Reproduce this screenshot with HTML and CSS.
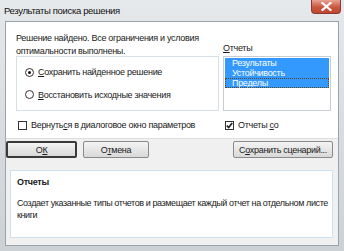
FILE: index.html
```html
<!DOCTYPE html>
<html lang="ru">
<head>
  <meta charset="UTF-8">
  <title>Результаты поиска решения</title>
  <link rel="stylesheet" href="styles.css">
</head>
<body>
  <div class="window">
    <div class="titlebar">
      <span class="title">Результаты поиска решения</span>
      <span class="close">
        <svg width="11" height="9" viewBox="0 0 11 9">
          <path d="M1.5 1 L9.5 8 M9.5 1 L1.5 8" stroke="#fff" stroke-width="2.2" stroke-linecap="square"/>
        </svg>
      </span>
    </div>
    <div class="client">
      <div class="main">
        <div class="left">
          <p class="msg">Решение найдено. Все ограничения и условия<br>оптимальности выполнены.</p>
          <div class="choice">
            <label class="opt"><span class="radio on"></span><span><u>С</u>охранить найденное решение</span></label>
            <label class="opt"><span class="radio"></span><span><u>В</u>осстановить исходные значения</span></label>
          </div>
        </div>
        <div class="right">
          <div class="list-label"><u>О</u>тчеты</div>
          <ul class="list">
            <li class="sel">Результаты</li>
            <li class="sel">Устойчивость</li>
            <li class="sel focus">Пределы</li>
          </ul>
        </div>
        <label class="check"><span class="box"></span><span>Вернуть<u>с</u>я в диалоговое окно параметров</span></label>
        <label class="check"><span class="box on">
          <svg width="7" height="7" viewBox="0 0 7 7"><path d="M0.8 3.6 L2.7 5.6 L6.2 1" fill="none" stroke="#222" stroke-width="1.6"/></svg>
        </span><span>Отчеты <u>с</u>о</span></label>
      </div>

      <div class="buttons">
        <button class="btn default">О<u>К</u></button>
        <button class="btn">О<u>т</u>мена</button>
        <button class="btn wide">С<u>о</u>хранить сценарий...</button>
      </div>

      <div class="help">
        <div class="help-title">Отчеты</div>
        <p class="help-text">Создает указанные типы отчетов и размещает каждый отчет на отдельном листе книги</p>
      </div>
    </div>
  </div>
</body>
</html>
```

FILE: styles.css
```css
body {
  margin: 0;
  font-family: 'Liberation Sans', Arial, sans-serif;
  font-size: 9px;
  letter-spacing: -0.3px;
  color: #1a1a1a;
}

.window {
  width: 344px;
  height: 251px;
  box-sizing: border-box;
  background: linear-gradient(to bottom, #e6e9ec, #ccd1d6);
  display: flex;
  flex-direction: column;
}

.titlebar {
  height: 21px;
  display: flex;
  align-items: flex-start;
  justify-content: space-between;
}

.title {
  font-size: 9.5px;
  letter-spacing: -0.35px;
  margin: 5px 0 0 4px;
  color: #111;
}

.close {
  width: 30px;
  height: 14px;
  margin-right: 3px;
  border: 1px solid #8a3a32;
  border-top: none;
  border-radius: 0 0 4px 4px;
  background: linear-gradient(to bottom, #e8a393, #c9563f 55%, #c0452f);
  display: flex;
  align-items: center;
  justify-content: center;
  box-sizing: border-box;
}

.client {
  flex: 1;
  margin: 0 5px 5px;
  background: #f0f0f0;
  border: 1px solid #9aa3ac;
  display: flex;
  flex-direction: column;
}

.main {
  background: #fff;
  border-bottom: 1px solid #dfdfdf;
  padding: 10px 6px 7px 10px;
  display: grid;
  grid-template-columns: 203px 108px;
  column-gap: 4px;
  row-gap: 8px;
}

.msg {
  margin: 0;
  line-height: 13px;
}

.choice {
  margin-top: -2px;
  height: 55px;
  border: 1px solid #d5dfe5;
  display: flex;
  flex-direction: column;
  justify-content: space-around;
  padding: 4px 0;
  box-sizing: border-box;
}

.opt {
  display: flex;
  align-items: center;
  padding-left: 8px;
}

.radio {
  width: 9px;
  height: 9px;
  border: 1px solid #333;
  border-radius: 50%;
  box-sizing: border-box;
  margin-right: 4px;
  display: flex;
  align-items: center;
  justify-content: center;
}

.radio.on::after {
  content: "";
  width: 3px;
  height: 3px;
  border-radius: 50%;
  background: #111;
}

.right {
  display: flex;
  flex-direction: column;
  justify-content: flex-end;
}

.list-label {
  line-height: 12px;
  margin-bottom: 2px;
}

.list {
  list-style: none;
  margin: 0;
  padding: 1px;
  height: 55px;
  box-sizing: border-box;
  border: 1px solid #c8cdd2;
}

.list li {
  height: 10px;
  line-height: 10px;
  padding-left: 7px;
  overflow: hidden;
}

.list li.sel {
  background: #3399ff;
  color: #fff;
}

.list li.focus {
  outline: 1px dotted #5a4322;
  outline-offset: -1px;
}

.check {
  display: flex;
  align-items: center;
  height: 12px;
  padding-left: 2px;
}

.box {
  width: 9px;
  height: 9px;
  border: 1px solid #333;
  box-sizing: border-box;
  background: #fff;
  margin-right: 4px;
  display: flex;
  align-items: center;
  justify-content: center;
}

.buttons {
  display: flex;
  padding: 2px 5px 0 0;
  height: 29px;
  align-items: flex-start;
}

.btn {
  font-family: 'Liberation Sans', Arial, sans-serif;
  font-size: 9px;
  letter-spacing: -0.3px;
  height: 17px;
  padding: 0;
  border: 1px solid #8a8a8a;
  border-radius: 2px;
  background: linear-gradient(to bottom, #f4f4f4, #e6e6e6 50%, #d9d9d9);
  color: #1a1a1a;
  width: 66px;
  margin-left: 6px;
}

.btn.default {
  width: 71px;
  margin-left: 0;
  border: 2px solid #3a3a3a;
}

.btn.wide {
  width: 100px;
  margin-left: auto;
}

.help {
  flex: 1;
  margin: 0 5px 7px 4px;
  background: #fff;
  border: 1px solid #cfe0ee;
  padding: 5px 3px 0 6px;
}

.help-title {
  font-weight: bold;
  line-height: 12px;
}

.help-text {
  margin: 9px 0 0;
  line-height: 12px;
  letter-spacing: -0.4px;
}
```
